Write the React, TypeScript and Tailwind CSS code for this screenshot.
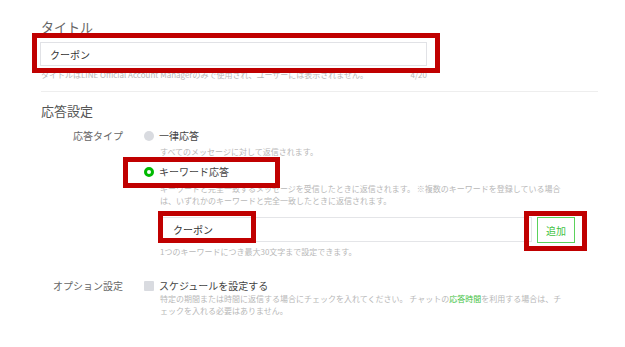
export default function App() {
  return (
    <div className="relative w-[625px] h-[347px] overflow-hidden bg-white text-[#555] font-['Noto_Sans_CJK_JP','Liberation_Sans',sans-serif]">
      <div className="pl-[41px] pt-[19px]">
        <div className="text-[13px] leading-[16px] text-[#666]">タイトル</div>
        <div className="mt-[7px] ml-[-1px] w-[387px] h-[24px] border border-[#e1e2e6] flex items-center pl-[9px] text-[10px] text-[#333]">
          クーポン
        </div>
        <div className="mt-[3px] w-[386px] flex justify-between text-[8px] leading-[12px] text-[#b8b8b8] whitespace-nowrap">
          <span>タイトルはLINE Official Account Managerのみで使用され、ユーザーには表示されません。</span>
          <span>4/20</span>
        </div>
        <div className="mt-[10px] w-[557px] border-t border-[#eeeeee]" />
        <div className="mt-[11px] text-[13px] leading-[16px] text-[#555]">応答設定</div>

        <div className="mt-[10px] flex">
          <div className="w-[82px] text-right text-[10px] leading-[14px] text-[#666] whitespace-nowrap">応答タイプ</div>
          <div className="ml-[21px] flex flex-col">
            <div className="flex items-center gap-[5px] h-[14px]">
              <div className="w-[10px] h-[10px] rounded-full bg-[#d9dbe0]" />
              <span className="text-[10px] leading-[14px] text-[#444]">一律応答</span>
            </div>
            <div className="mt-[3px] ml-[16px] text-[8px] leading-[12px] text-[#b8b8b8] whitespace-nowrap">
              すべてのメッセージに対して返信されます。
            </div>
            <div className="mt-[7px] flex items-center gap-[5px] h-[14px]">
              <div className="w-[10px] h-[10px] rounded-full border-[3px] border-[#00b900] bg-white" />
              <span className="text-[10px] leading-[14px] text-[#444]">キーワード応答</span>
            </div>
            <div className="mt-[4px] ml-[16px] text-[8px] leading-[12px] text-[#b8b8b8] whitespace-nowrap">
              <div>キーワードと完全一致するメッセージを受信したときに返信されます。 ※複数のキーワードを登録している場合</div>
              <div>は、いずれかのキーワードと完全一致したときに返信されます。</div>
            </div>
            <div className="mt-[10px] ml-[16px] flex items-stretch">
              <div className="w-[372px] h-[25px] border border-[#e4e5e8] flex items-center pl-[12px] text-[10px] text-[#333]">
                クーポン
              </div>
              <div className="ml-[5px] w-[38px] h-[26px] border border-[#5bd25b] flex items-center justify-center text-[10px] text-[#3fc23f]">
                追加
              </div>
            </div>
            <div className="mt-[3px] ml-[16px] text-[8px] leading-[12px] text-[#b8b8b8] whitespace-nowrap">
              1つのキーワードにつき最大30文字まで設定できます。
            </div>
          </div>
        </div>

        <div className="mt-[21px] flex">
          <div className="w-[82px] text-right text-[10px] leading-[14px] text-[#666] whitespace-nowrap">オプション設定</div>
          <div className="ml-[21px] flex flex-col">
            <div className="flex items-center gap-[5px] h-[14px]">
              <div className="w-[10px] h-[10px] rounded-[1px] bg-[#d9dbe0]" />
              <span className="text-[10px] leading-[14px] text-[#444]">スケジュールを設定する</span>
            </div>
            <div className="ml-[16px] text-[8px] leading-[12px] text-[#b8b8b8] whitespace-nowrap">
              <div>
                特定の期間または時間に返信する場合にチェックを入れてください。 チャットの
                <span className="text-[#3fc23f]">応答時間</span>
                を利用する場合は、チ
              </div>
              <div>ェックを入れる必要はありません。</div>
            </div>
          </div>
        </div>
      </div>

      <div className="absolute left-[32px] top-[33px] w-[408px] h-[40px] border-[5px] border-[#c00000]" />
      <div className="absolute left-[123px] top-[157px] w-[157px] h-[31px] border-[5px] border-[#c00000]" />
      <div className="absolute left-[158px] top-[211px] w-[98px] h-[32px] border-[5px] border-[#c00000]" />
      <div className="absolute left-[524px] top-[211px] w-[63px] h-[40px] border-[5px] border-[#c00000]" />
    </div>
  );
}
